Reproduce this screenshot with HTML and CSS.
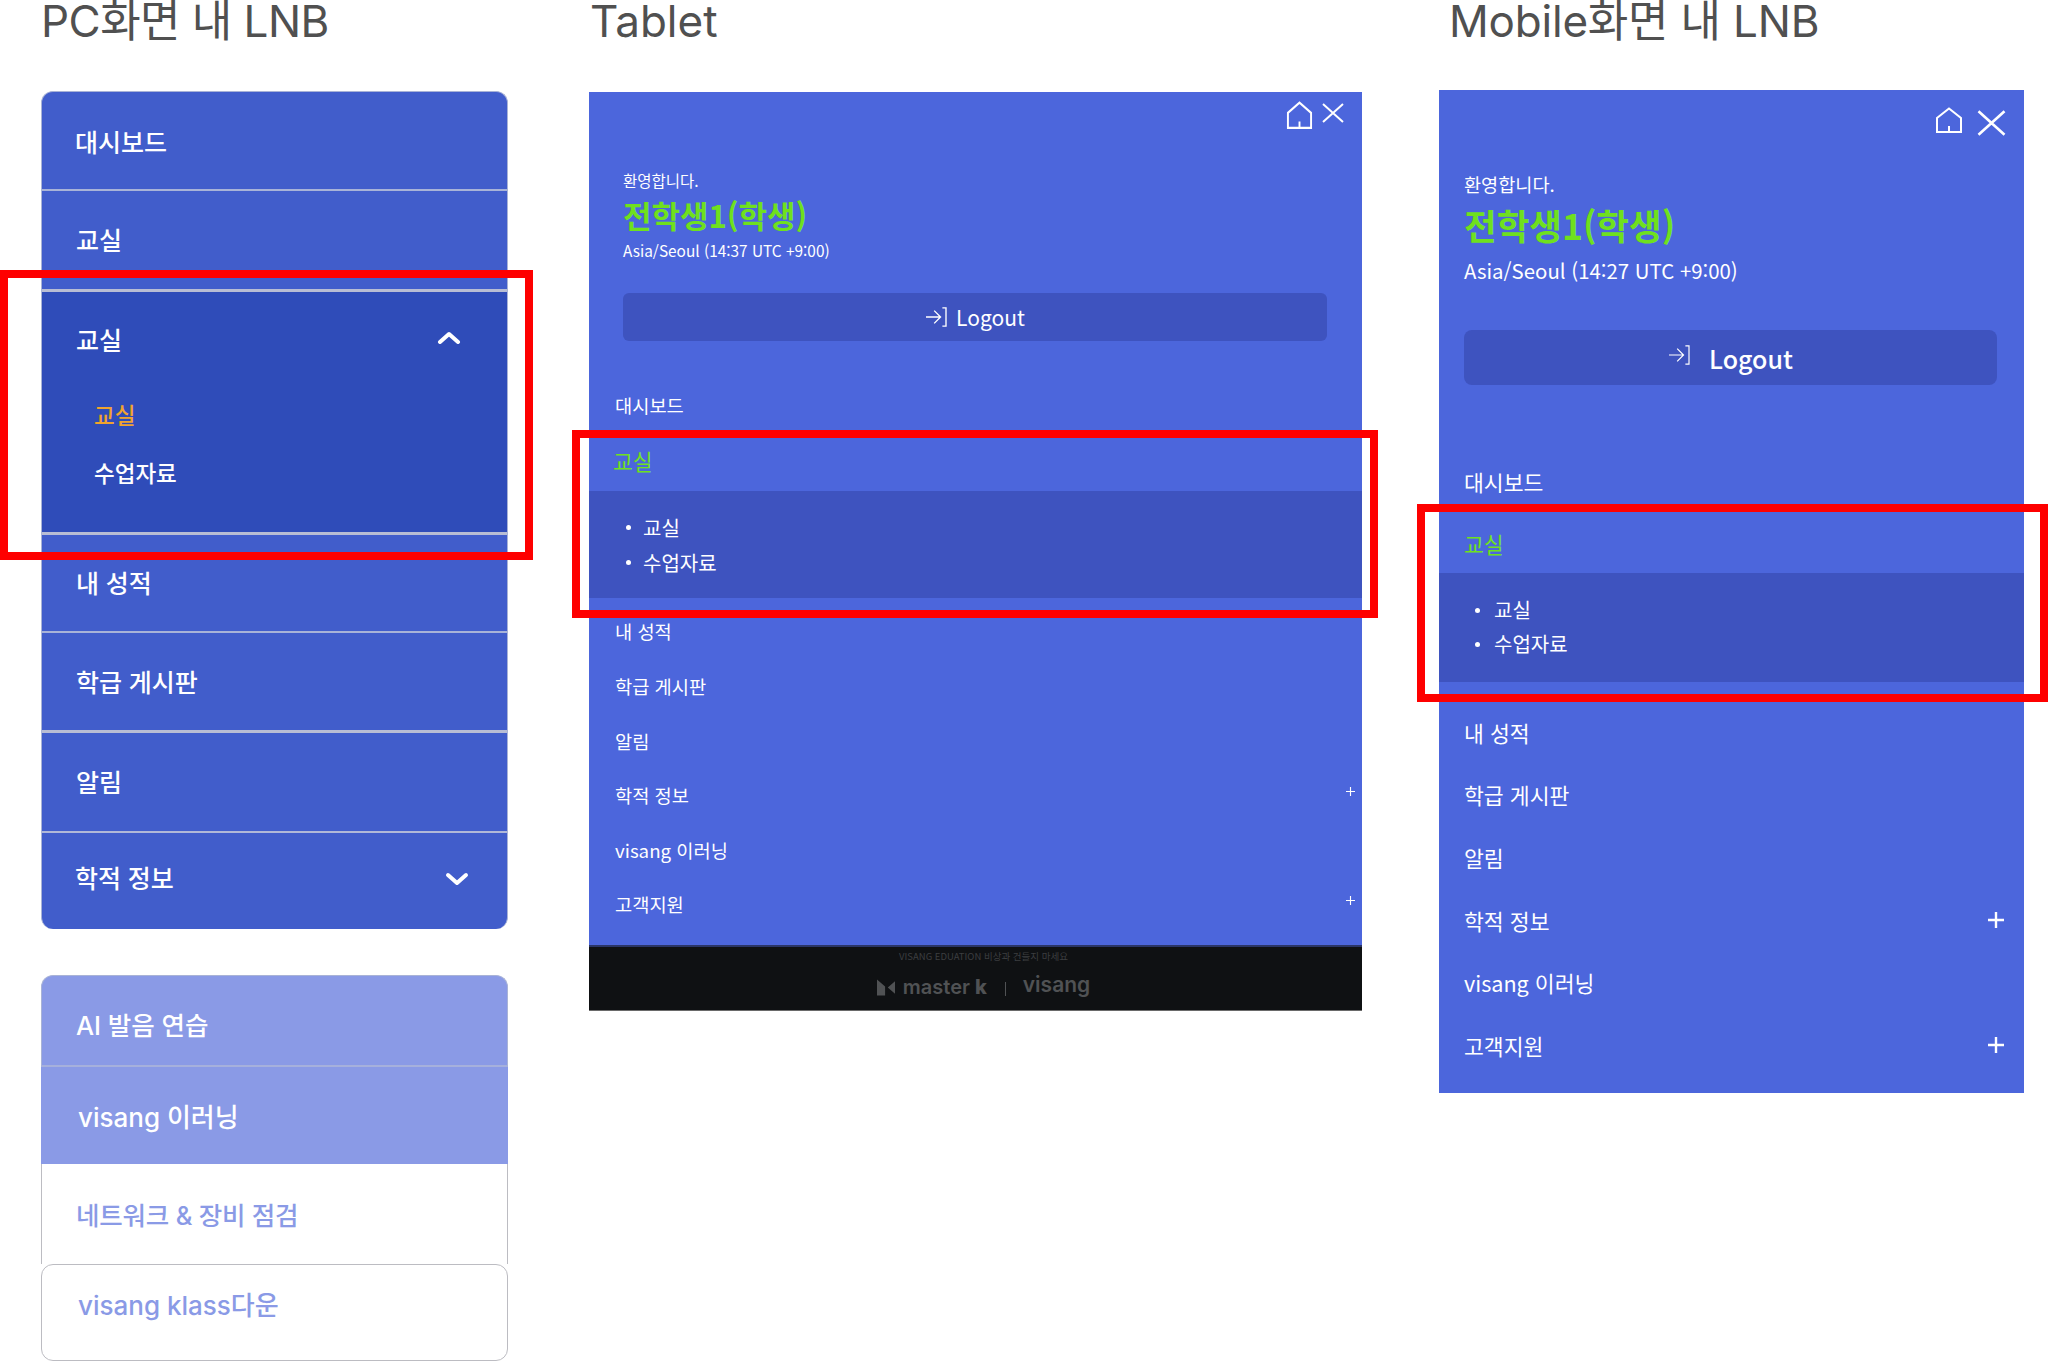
FILE: index.html
```html
<!DOCTYPE html>
<html lang="ko">
<head>
    <meta charset="UTF-8">
    <title>LNB</title>
    <link rel="stylesheet" href="styles.css">
</head>
<body>
    <div class="page">
        <!-- PC -->
        <section class="col col-pc">
            <h2 class="col-title">PC화면 내 LNB</h2>
            <ul class="pc-nav">
                <li class="pc-row pc-first">대시보드</li>
                <li class="pc-row pc-second">교실</li>
                <li class="pc-open">
                    <div class="pc-open-head">
                        <span>교실</span>
                        <svg class="chevron" viewBox="0 0 24 14"><path d="M3 12 L12 4 L21 12"/></svg>
                    </div>
                    <a class="pc-sub pc-sub-on">교실</a>
                    <a class="pc-sub">수업자료</a>
                </li>
                <li class="pc-row pc-third">내 성적</li>
                <li class="pc-row">학급 게시판</li>
                <li class="pc-row pc-thick">알림</li>
                <li class="pc-row pc-last">
                    <span>학적 정보</span>
                    <svg class="chevron chevron-down" viewBox="0 0 24 14"><path d="M3 3 L12 11 L21 3"/></svg>
                </li>
            </ul>
            <ul class="pc-links">
                <li class="link-row link-fill link-ai">AI 발음 연습</li>
                <li class="link-row link-fill link-learn">visang 이러닝</li>
                <li class="link-row link-line">네트워크 &amp; 장비 점검</li>
                <li class="link-row link-line link-klass">visang klass다운</li>
            </ul>
        </section>

        <!-- Tablet -->
        <section class="col col-tablet">
            <h2 class="col-title">Tablet</h2>
            <div class="panel tablet">
                <div class="panel-icons">
                    <svg class="icon-home" viewBox="0 0 28 26" preserveAspectRatio="none"><path d="M2 25 V11 L14 1.5 L26 11 V25 Z M14 25 V19"/></svg>
                    <svg class="icon-close" viewBox="0 0 22 20"><path d="M1 1 L21 19 M21 1 L1 19"/></svg>
                </div>
                <p class="welcome">환영합니다.</p>
                <p class="user-name">전학생1(학생)</p>
                <p class="timezone">Asia/Seoul (14:37 UTC +9:00)</p>
                <button class="logout">
                    <svg class="icon-logout" viewBox="0 0 24 22"><path d="M1 11 H16 M10 4 L17 11 L10 18 M19 1 H23 V21 H19"/></svg>
                    <span>Logout</span>
                </button>
                <ul class="side-nav">
                    <li class="side-row">대시보드</li>
                    <li class="side-row side-active">교실</li>
                    <li class="side-sub">
                        <a>교실</a>
                        <a>수업자료</a>
                    </li>
                    <li class="side-row side-after">내 성적</li>
                    <li class="side-row">학급 게시판</li>
                    <li class="side-row">알림</li>
                    <li class="side-row"><span>학적 정보</span><svg class="icon-plus" viewBox="0 0 16 16"><path d="M8 0 V16 M0 8 H16"/></svg></li>
                    <li class="side-row">visang 이러닝</li>
                    <li class="side-row"><span>고객지원</span><svg class="icon-plus" viewBox="0 0 16 16"><path d="M8 0 V16 M0 8 H16"/></svg></li>
                </ul>
                <div class="tablet-foot">
                    <p class="foot-note">VISANG EDUATION 비상과 건들지 마세요</p>
                    <div class="foot-logos">
                        <svg class="foot-mark" viewBox="0 0 20 18"><path d="M0 0 L9 8 V18 H0 Z M20 2 L12 9 L20 16 Z"/></svg>
                        <span class="foot-master">master <b>k</b></span>
                        <i class="foot-bar"></i>
                        <span class="foot-visang">visang</span>
                    </div>
                </div>
            </div>
        </section>

        <!-- Mobile -->
        <section class="col col-mobile">
            <h2 class="col-title">Mobile화면 내 LNB</h2>
            <div class="panel mobile">
                <div class="panel-icons">
                    <svg class="icon-home" viewBox="0 0 28 26"><path d="M2 25 V11 L14 1.5 L26 11 V25 Z M14 25 V19"/></svg>
                    <svg class="icon-close" viewBox="0 0 22 20"><path d="M1 1 L21 19 M21 1 L1 19"/></svg>
                </div>
                <p class="welcome">환영합니다.</p>
                <p class="user-name">전학생1(학생)</p>
                <p class="timezone">Asia/Seoul (14:27 UTC +9:00)</p>
                <button class="logout">
                    <svg class="icon-logout" viewBox="0 0 24 22"><path d="M1 11 H16 M10 4 L17 11 L10 18 M19 1 H23 V21 H19"/></svg>
                    <span>Logout</span>
                </button>
                <ul class="side-nav">
                    <li class="side-row">대시보드</li>
                    <li class="side-row side-active">교실</li>
                    <li class="side-sub">
                        <a>교실</a>
                        <a>수업자료</a>
                    </li>
                    <li class="side-row side-after">내 성적</li>
                    <li class="side-row">학급 게시판</li>
                    <li class="side-row">알림</li>
                    <li class="side-row"><span>학적 정보</span><svg class="icon-plus" viewBox="0 0 16 16"><path d="M8 0 V16 M0 8 H16"/></svg></li>
                    <li class="side-row">visang 이러닝</li>
                    <li class="side-row"><span>고객지원</span><svg class="icon-plus" viewBox="0 0 16 16"><path d="M8 0 V16 M0 8 H16"/></svg></li>
                </ul>
            </div>
        </section>

        <!-- red highlight frames -->
        <div class="mark mark-pc"></div>
        <div class="mark mark-tablet"></div>
        <div class="mark mark-mobile"></div>
    </div>
</body>
</html>
```

FILE: styles.css
```css
* {
    margin: 0;
    padding: 0;
    box-sizing: border-box;
}

html,
body {
    width: 2048px;
    height: 1361px;
    overflow: hidden;
    background: white;
}

body {
    font-family: Inter, "Noto Sans CJK KR", sans-serif;
}

ul {
    list-style: none;
}

svg {
    fill: none;
    stroke: white;
    display: block;
    flex-shrink: 0;
}

.page {
    position: relative;
    display: grid;
    grid-template-columns: 589px 850px 609px;
    height: 1361px;
    overflow: hidden;
}

.col-title {
    height: 91px;
    font-size: 44px;
    line-height: 42px;
    font-weight: 400;
    color: #505050;
    white-space: nowrap;
}

.col-pc {
    padding-left: 41px;
}

.col-pc .col-title {
    letter-spacing: -0.55px;
}

.col-tablet .col-title {
    height: 92px;
    padding-left: 1px;
}

.col-mobile .col-title {
    padding-left: 10px;
    height: 90px;
    letter-spacing: -0.2px;
}

/* PC */
.pc-nav {
    width: 467px;
    height: 838px;
    background: #415dcb;
    border-radius: 12px;
    border: 1px solid #a9b3d6;
    border-width: 1px 1px 0;
    overflow: hidden;
    color: white;
    font-size: 25px;
    font-weight: 500;
}

.pc-row {
    display: flex;
    align-items: center;
    justify-content: space-between;
    height: 99px;
    padding: 0 38px 0 33px;
    border-bottom: 2px solid #a8b3d8;
}

.pc-second {
    height: 98px;
    border-bottom: 0;
    padding-left: 34px;
    padding-bottom: 2px;
}

.pc-third {
    height: 98px;
    padding-left: 34px;
    padding-bottom: 2px;
}

.pc-row:nth-child(5),
.pc-thick {
    padding-left: 34px;
}

.pc-thick {
    height: 100px;
    padding-bottom: 2px;
    border-bottom: 2px solid #b0b8d8;
}

.pc-row:nth-child(5) {
    height: 100px;
    padding-bottom: 1px;
    border-bottom: 3px solid #b8bdd4;
}

.pc-last {
    height: 96px;
    border-bottom: 0;
    padding-bottom: 8px;
}

.pc-open {
    height: 246px;
    background: #2f4cb9;
    border-top: 3px solid #b8bdd4;
    border-bottom: 3px solid #b8bdd4;
}

.pc-open-head {
    display: flex;
    align-items: center;
    justify-content: space-between;
    height: 94px;
    padding: 0 46px 0 34px;
    margin-bottom: 8px;
}

.pc-open-head .chevron {
    margin-top: -4px;
}

.chevron {
    width: 24px;
    height: 14px;
}

.chevron path {
    stroke-width: 4;
    stroke-linecap: round;
    stroke-linejoin: round;
}

.chevron-down {
    margin-top: 4px;
}

.pc-sub {
    display: block;
    height: 58px;
    line-height: 44px;
    padding-left: 52px;
    font-size: 22.5px;
}

.pc-sub-on {
    color: #f0a32e;
}

.pc-links {
    width: 467px;
    margin-top: 46px;
    font-size: 25.5px;
    font-weight: 500;
}

.link-row {
    display: flex;
    align-items: center;
    padding-left: 34px;
}

.link-fill {
    background: #8a9ae6;
    color: white;
}

.link-ai {
    height: 92px;
    padding-top: 6px;
    border-radius: 12px 12px 0 0;
    border: 1px solid #a9b3d6;
    border-width: 1px 1px 2px;
    border-bottom-color: #a6b0dc;
}

.link-learn {
    height: 97px;
    padding-left: 37px;
    padding-bottom: 1px;
    font-size: 26px;
}

.link-line {
    height: 100px;
    padding-bottom: 1px;
    color: #8a9ae6;
    border: 1px solid #bcbcc2;
    border-width: 0 1px;
    letter-spacing: -0.2px;
}

.link-klass {
    height: 97px;
    padding-left: 36px;
    padding-bottom: 18px;
    border-width: 1px;
    border-radius: 12px;
    letter-spacing: 0;
    font-size: 26px;
}

/* tablet + mobile */
.panel {
    background: #4c66dc;
    color: white;
    font-family: "Noto Sans CJK KR", sans-serif;
}

.panel-icons {
    display: flex;
    justify-content: flex-end;
}

.icon-home path,
.icon-close path,
.icon-plus path,
.icon-logout path {
    stroke-width: 2;
}

.user-name {
    color: #6fe01e;
    font-weight: 700;
}

.logout {
    display: flex;
    align-items: center;
    justify-content: center;
    background: #3e53bf;
    color: white;
    border: none;
    border-radius: 6px;
    font-family: inherit;
}

.side-row {
    display: flex;
    align-items: center;
    justify-content: space-between;
}

.side-active {
    color: #6fe01e;
}

.side-sub {
    background: #3e53bf;
}

.side-sub a {
    display: block;
    position: relative;
}

.side-sub a::before {
    content: "";
    position: absolute;
    top: 50%;
    width: 5px;
    height: 5px;
    margin-top: -2px;
    border-radius: 50%;
    background: white;
}

.tablet {
    width: 773px;
}

.tablet .panel-icons {
    gap: 9px;
    height: 40px;
    padding: 9px 18px 0 0;
}

.tablet .icon-home {
    width: 27px;
    height: 28px;
}

.tablet .icon-close {
    width: 22px;
    height: 20px;
    margin-top: 2px;
}

.tablet .welcome {
    margin: 38px 0 0 34px;
    font-size: 15.5px;
    line-height: 20px;
}

.tablet .user-name {
    margin: 3px 0 0 34px;
    font-size: 31px;
    line-height: 44px;
}

.tablet .timezone {
    margin: 3px 0 0 34px;
    font-size: 15.4px;
    line-height: 20px;
}

.tablet .logout {
    gap: 9px;
    width: 704px;
    height: 48px;
    margin: 33px 0 0 34px;
    font-size: 21px;
}

.tablet .icon-logout {
    width: 22px;
    height: 20px;
}

.tablet .icon-logout path {
    stroke-width: 1.5;
}

.tablet .side-nav {
    margin-top: 36.5px;
    font-size: 18.7px;
}

.tablet .side-row {
    height: 54.6px;
    padding: 0 7px 0 26px;
}

.tablet .side-active {
    height: 58.5px;
    padding-left: 24px;
    padding-bottom: 2px;
    font-size: 21.5px;
}

.tablet .side-sub {
    height: 107px;
    padding-top: 19px;
    margin-bottom: 6px;
    font-size: 20px;
}

.tablet .side-sub a {
    height: 35px;
    line-height: 35px;
    padding-left: 54px;
}

.tablet .side-sub a::before {
    left: 37px;
}

.tablet .icon-plus {
    width: 9px;
    height: 9px;
    margin-top: -7px;
}

.tablet .icon-plus path {
    stroke-width: 2;
}

.tablet-foot {
    height: 66px;
    margin-top: 14px;
    background: #0f1113;
    border-top: 2px solid #2a3566;
    border-bottom: 1px solid #6a6a6a;
    text-align: center;
}

.foot-note {
    padding: 3px 0 0 16px;
    font-size: 9.5px;
    line-height: 12px;
    color: #3c3e40;
}

.foot-logos {
    display: flex;
    align-items: center;
    justify-content: center;
    padding-left: 16px;
    margin-top: 13px;
    color: #505254;
    font-family: Inter, sans-serif;
    font-size: 20px;
    font-weight: 600;
    line-height: 24px;
}

.foot-mark {
    width: 18px;
    height: 17px;
    margin-right: 8px;
    fill: #505254;
    stroke: none;
}

.foot-bar {
    width: 1px;
    height: 14px;
    margin: 4px 17px 0 18px;
    background: #505254;
}

.foot-master b {
    font-weight: 800;
}

.foot-visang {
    margin-top: -4px;
    font-size: 21px;
}

.mobile {
    width: 585px;
    height: 1003px;
}

.mobile .panel-icons {
    gap: 14px;
    height: 46px;
    padding: 17px 18px 0 0;
}

.mobile .icon-home {
    width: 28px;
    height: 26px;
}

.mobile .icon-close {
    width: 29px;
    height: 26px;
    margin-top: 3px;
}

.mobile .welcome {
    margin: 37px 0 0 25px;
    font-size: 18.6px;
    line-height: 22px;
}

.mobile .user-name {
    margin: 5px 0 0 25px;
    font-size: 35.5px;
    line-height: 50px;
}

.mobile .timezone {
    margin: 6px 0 0 25px;
    font-size: 20.4px;
    line-height: 28px;
}

.mobile .logout {
    gap: 19px;
    width: 533px;
    height: 55px;
    margin: 46px 0 0 25px;
    border-radius: 8px;
    font-size: 25px;
    font-weight: 500;
}

.mobile .icon-logout {
    width: 22px;
    height: 20px;
    margin-top: -6px;
}

.mobile .icon-logout path {
    stroke-width: 1.3;
}

.mobile .side-nav {
    margin-top: 65px;
    font-size: 21.6px;
}

.mobile .side-row {
    height: 62.7px;
    padding: 0 20px 0 25px;
}

.mobile .side-active {
    height: 60px;
    padding-top: 2px;
}

.mobile .side-sub {
    height: 109px;
    padding-top: 20px;
    margin-bottom: 19px;
    font-size: 20px;
}

.mobile .side-sub a {
    height: 34px;
    line-height: 34px;
    padding-left: 55px;
}

.mobile .side-sub a::before {
    left: 36px;
}

.mobile .icon-plus {
    width: 16px;
    height: 16px;
}

.mobile .icon-plus path {
    stroke-width: 2.4;
}

/* red frames over the screens */
.mark {
    position: absolute;
    border: 8px solid #fe0000;
}

.mark-pc {
    left: 0;
    top: 270px;
    width: 533px;
    height: 290px;
}

.mark-tablet {
    left: 572px;
    top: 430px;
    width: 806px;
    height: 188px;
}

.mark-mobile {
    left: 1417px;
    top: 504px;
    width: 631px;
    height: 198px;
}
```
